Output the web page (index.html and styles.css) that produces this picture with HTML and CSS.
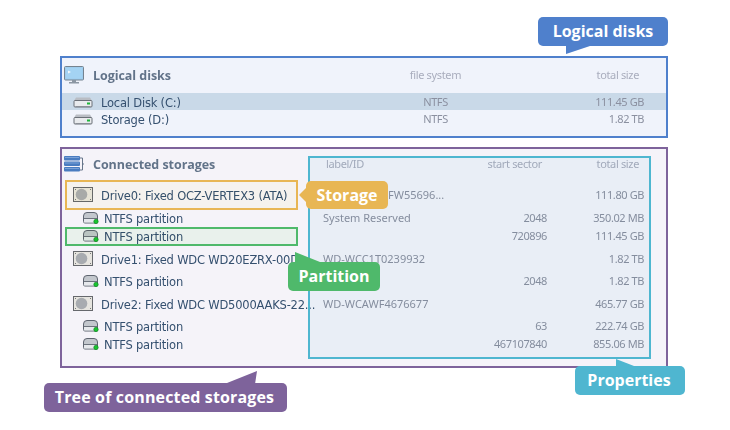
FILE: index.html
```html
<!DOCTYPE html>
<html lang="en">
<head>
<meta charset="utf-8">
<title>Logical disks and connected storages</title>
<link rel="stylesheet" href="styles.css">
</head>
<body>
<svg class="defs" width="0" height="0" aria-hidden="true">
  <symbol id="hdd" viewBox="0 0 20 12">
    <path d="M1 5 L3 1.5 H17 L19 5 Z" fill="#b9bdc4"/>
    <rect x="1" y="4.5" width="18" height="6.5" rx="1" fill="#e9ebee" stroke="#6b7078"/>
    <rect x="14" y="6.5" width="3" height="2" fill="#1fb53a"/>
    <rect x="2.5" y="10" width="15" height="1" fill="#8c9098"/>
  </symbol>
  <symbol id="drive" viewBox="0 0 20 15">
    <rect x=".5" y=".5" width="19" height="14" fill="#e6e4df" stroke="#66686d"/>
    <circle cx="8.500" cy="7.500" r="5.800" fill="#a8abb0"/>
    <rect x="17" y="2" width="1" height="1" fill="#777"/>
    <rect x="17" y="12" width="1" height="1" fill="#777"/>
    <rect x="2" y="2" width="1" height="1" fill="#777"/>
    <rect x="2" y="12" width="1" height="1" fill="#777"/>
  </symbol>
  <symbol id="part" viewBox="0 0 16 12">
    <path d="M.5 4 Q.5 .5 4 .5 H11 Q14.500 .5 14.500 4 V9.500 Q14.500 11 13 11 H2 Q.5 11 .5 9.500 Z" fill="#c3c7cd" stroke="#5f6570"/>
    <path d="M1 6.500 H14" stroke="#6c727c"/>
    <rect x="1" y="7" width="13" height="3.500" fill="#e6e8ec"/>
    <circle cx="13" cy="9.500" r="2.200" fill="#19c42f" stroke="#0f7d20" stroke-width=".6"/>
  </symbol>
</svg>

<main class="stage">
  <section class="panel panel-logical">
    <div class="row head head-logical">
      <div class="name">
        <svg class="title-icon" width="20" height="18" viewBox="0 0 20 18" aria-hidden="true">
          <rect x=".5" y=".5" width="19" height="13.500" rx="1" fill="#9fcdee" stroke="#76838f"/>
          <rect x="2" y="2" width="16" height="10.500" fill="#a4d3f3"/>
          <path d="M4 4.500 L7 6 L4 7.500Z" fill="#f2f8fc"/>
          <rect x="8" y="14" width="4" height="2" fill="#8c97a3"/>
          <rect x="5" y="16" width="10" height="1.500" fill="#8c97a3"/>
        </svg>
        <span class="title">Logical disks</span>
      </div>
      <div class="center">file system</div>
      <div class="end">total size</div>
    </div>
    <div class="row disk selected">
      <div class="name"><svg class="hdd"><use href="#hdd"/></svg><span>Local Disk (C:)</span></div>
      <div class="center val">NTFS</div>
      <div class="end val">111.45 GB</div>
    </div>
    <div class="row disk">
      <div class="name"><svg class="hdd"><use href="#hdd"/></svg><span>Storage (D:)</span></div>
      <div class="center val">NTFS</div>
      <div class="end val">1.82 TB</div>
    </div>
  </section>

  <section class="panel panel-storages">
    <div class="tree-row head head-storages">
      <div class="name">
        <svg class="title-icon" width="20" height="18" viewBox="0 0 20 18" aria-hidden="true">
          <path d="M16 3H18.500V15H16M18.500 9H20" fill="none" stroke="#66758a"/>
          <rect x="0" y="1" width="16" height="4.500" rx="1" fill="#4a7cc0"/>
          <rect x="0" y="6.500" width="16" height="4.500" rx="1" fill="#4a7cc0"/>
          <rect x="0" y="12" width="16" height="4.500" rx="1" fill="#4a7cc0"/>
          <rect x="1" y="2" width="14" height="1" fill="#7ba2d8"/>
          <rect x="1" y="7.500" width="14" height="1" fill="#7ba2d8"/>
          <rect x="1" y="13" width="14" height="1" fill="#7ba2d8"/>
        </svg>
        <span class="title">Connected storages</span>
      </div>
      <div class="label">label/ID</div>
      <div class="sector">start sector</div>
      <div class="end">total size</div>
    </div>
    <div class="tree-row drive drive-first">
      <div class="name"><svg class="drive-icon"><use href="#drive"/></svg><span>Drive0: Fixed OCZ-VERTEX3 (ATA)</span></div>
      <div class="label label-shifted val">FW55696...</div><div class="sector val"></div><div class="end val">111.80 GB</div>
    </div>
    <div class="tree-row part">
      <div class="name"><svg class="part-icon"><use href="#part"/></svg><span>NTFS partition</span></div>
      <div class="label val">System Reserved</div><div class="sector val">2048</div><div class="end val">350.02 MB</div>
    </div>
    <div class="tree-row part">
      <div class="name"><svg class="part-icon"><use href="#part"/></svg><span>NTFS partition</span></div>
      <div class="label val"></div><div class="sector val">720896</div><div class="end val">111.45 GB</div>
    </div>
    <div class="tree-row drive">
      <div class="name"><svg class="drive-icon"><use href="#drive"/></svg><span>Drive1: Fixed WDC WD20EZRX-00D</span></div>
      <div class="label val">WD-WCC1T0239932</div><div class="sector val"></div><div class="end val">1.82 TB</div>
    </div>
    <div class="tree-row part">
      <div class="name"><svg class="part-icon"><use href="#part"/></svg><span>NTFS partition</span></div>
      <div class="label val"></div><div class="sector val">2048</div><div class="end val">1.82 TB</div>
    </div>
    <div class="tree-row drive">
      <div class="name"><svg class="drive-icon"><use href="#drive"/></svg><span>Drive2: Fixed WDC WD5000AAKS-22...</span></div>
      <div class="label val">WD-WCAWF4676677</div><div class="sector val"></div><div class="end val">465.77 GB</div>
    </div>
    <div class="tree-row part">
      <div class="name"><svg class="part-icon"><use href="#part"/></svg><span>NTFS partition</span></div>
      <div class="label val"></div><div class="sector val">63</div><div class="end val">222.74 GB</div>
    </div>
    <div class="tree-row part">
      <div class="name"><svg class="part-icon"><use href="#part"/></svg><span>NTFS partition</span></div>
      <div class="label val"></div><div class="sector val">467107840</div><div class="end val">855.06 MB</div>
    </div>
  </section>

  <div class="outline outline-props"></div>
  <div class="outline outline-storage"></div>
  <div class="outline outline-partition"></div>

  <div class="callout callout-logical">Logical disks</div>
  <div class="callout callout-storage">Storage</div>
  <div class="callout callout-partition">Partition</div>
  <div class="callout callout-tree">Tree of connected storages</div>
  <div class="callout callout-props">Properties</div>
</main>
</body>
</html>
```

FILE: styles.css
```css
* { box-sizing: border-box; }
html, body { margin: 0; padding: 0; background: #fff; }
.defs { position: absolute; }

.stage {
  position: relative;
  width: 730px;
  height: 430px;
  overflow: hidden;
  padding: 56px 62px 0 60px;
  font: 12px/16px "DejaVu Sans", sans-serif;
  color: #35506f;
}

.panel { border: 2px solid; width: 608px; }
.name span { padding-top: 2px; }
.panel .name span:not(.title) { font-size: 11.5px; letter-spacing: -.2px; }
.panel-logical { height: 82px; border-color: #4f80cc; background: #f0f3fb; padding-top: 5px; }
.panel-storages { height: 221px; margin-top: 9px; border-color: #7e639b; background: #f5f3f9; padding-top: 6px; }

.row { display: grid; grid-template-columns: 261px 225px 96px; align-items: center; }
.tree-row { display: grid; grid-template-columns: 261px 124px 100px 97px; align-items: center; }

.name { display: flex; align-items: center; white-space: nowrap; }
.head { color: #a9adbd; font: 11px/16px "Noto Sans", sans-serif; letter-spacing: -.35px; }
.head .name { padding-left: 2px; letter-spacing: 0; }
.title-icon { flex: none; margin-right: 9px; }
.title { font: 700 12.5px/16px "Open Sans", sans-serif; color: #627389; letter-spacing: -.05px; }

.head-logical { height: 24px; margin-bottom: 6px; }
.head-storages { height: 18px; margin-bottom: 7px; }

.center { text-align: center; }
.end { text-align: right; }
.sector { text-align: right; }
.head .end { padding-right: 5px; }
.head .sector { padding-right: 5px; }
.head .label { padding-left: 3px; }
.val { color: #8b90a0; font: 11px/16px "Noto Sans", sans-serif; letter-spacing: -.4px; }
.label.val { letter-spacing: 0; white-space: nowrap; }
.label-shifted { padding-left: 65px; }

.disk { height: 17px; }
.selected { background: #c9d9e8; }
.disk .name { padding-left: 11px; }
.hdd { width: 20px; height: 12px; margin-right: 8px; flex: none; }

.drive { height: 27px; }
.drive-first { height: 29px; }
.drive .name { padding-left: 11px; }
.drive-icon { width: 20px; height: 15px; margin-right: 8px; flex: none; }

.part { height: 18px; }
.part .name { padding-left: 21px; }
.part-icon { width: 16px; height: 12px; margin-right: 5px; flex: none; }

.outline { position: absolute; border: 2px solid; }
.outline::before { content: ""; position: absolute; inset: 0; mix-blend-mode: multiply; }
.outline-props { left: 308px; top: 156px; width: 343px; height: 203px; border-color: #4fb6d0; }
.outline-props::before { background: #f3fafc; }
.outline-storage { left: 65px; top: 180px; width: 233px; height: 30px; border-color: #e8b654; }
.outline-storage::before { background: #fffef4; }
.outline-partition { left: 65px; top: 227px; width: 233px; height: 19px; border-color: #4fb96b; }
.outline-partition::before { background: #f3fdf2; }

.callout {
  position: absolute;
  height: 29px;
  border-radius: 5px;
  color: #fff;
  font: 700 16px/28px "Open Sans", sans-serif;
  text-align: center;
  white-space: nowrap;
}
.callout::after { content: ""; position: absolute; background: inherit; }

.callout-logical { left: 538px; top: 17px; width: 130px; background: #4f80cc; }
.callout-logical::after { left: 28px; top: 29px; width: 24px; height: 8px; clip-path: polygon(0 0, 100% 0, 0 100%); }

.callout-storage { left: 306px; top: 181px; width: 82px; height: 28px; background: #e8b654; }
.callout-storage::after { left: -7px; top: 7px; width: 7px; height: 14px; clip-path: polygon(100% 0, 100% 100%, 0 50%); }

.callout-partition { left: 288px; top: 262px; width: 92px; background: #4fb96b; }
.callout-partition::after { left: 7px; top: -10px; width: 25px; height: 10px; clip-path: polygon(0 0, 100% 100%, 0 100%); }

.callout-tree { left: 44px; top: 383px; width: 243px; padding-right: 2px; background: #7e639b; letter-spacing: .15px; }
.callout-tree::after { left: 183px; top: -12px; width: 30px; height: 12px; clip-path: polygon(100% 0, 94% 100%, 0 100%); }

.callout-props { left: 575px; top: 366px; width: 110px; padding-right: 2px; background: #4fb6d0; }
.callout-props::after { left: 41px; top: -7px; width: 18px; height: 7px; clip-path: polygon(0 0, 100% 100%, 0 100%); }
```
